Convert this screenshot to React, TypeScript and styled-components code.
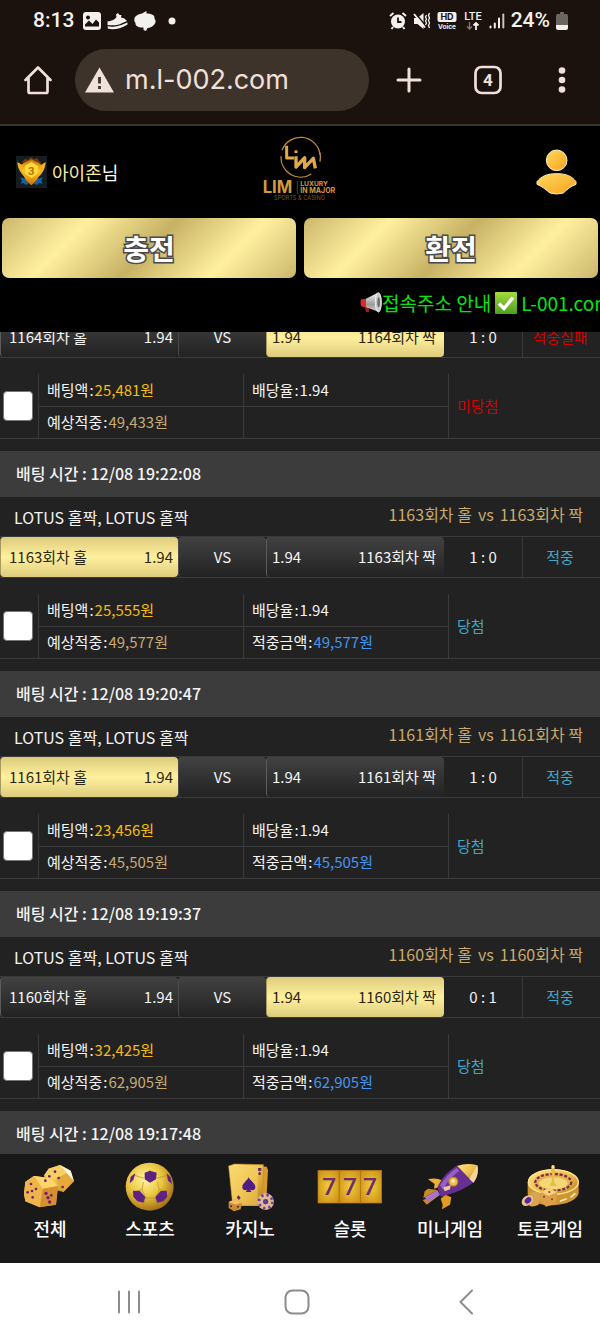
import React from "react";
import styled, { createGlobalStyle, css } from "styled-components";

const GlobalStyle = createGlobalStyle`
  *, *::before, *::after { box-sizing: border-box; }
  html, body { margin: 0; background: #222222; }
  body { font-family: "Noto Sans CJK KR", "Noto Sans", sans-serif; color: #f4f4f4; font-size: 15px; }
  button, input { font-family: inherit; margin: 0; }
  svg { display: block; flex: none; }
`;

const goldCell = "linear-gradient(180deg, #dccb7b 0%, #fff09e 50%, #dccb7b 100%)";
const darkCell = "linear-gradient(180deg, #424242 0%, #222222 100%)";
const goldButton =
  "linear-gradient(135deg, #cbb76c 0%, #fff09f 25%, #c7b164 50%, #fff09f 75%, #cbb76c 100%)";

const Screen = styled.div`
  display: flex;
  flex-direction: column;
  height: 100vh;
  overflow: hidden;
`;

/* ---------- browser chrome ---------- */

const Chrome = styled.header`
  flex: none;
  background: #1b120d;
  border-bottom: 2px solid #3b332a;
  padding-bottom: 13px;
`;

const StatusBar = styled.div`
  display: flex;
  align-items: center;
  justify-content: space-between;
  height: 41px;
  padding: 0 32px;
  font: 500 21px/41px Roboto, sans-serif;
  color: #f3f0ee;
`;

const StatusGroup = styled.div`
  display: flex;
  align-items: center;
  gap: 6px;
`;

const Clock = styled.span`
  padding: 0 3px 0 1px;
`;

const AddressRow = styled.div`
  display: flex;
  align-items: center;
  height: 62px;
  margin-top: 8px;
  padding: 0 28px 0 24px;
`;

const ChromeButton = styled.button<{ $left?: number }>`
  display: flex;
  align-items: center;
  justify-content: center;
  border: 0;
  padding: 0;
  margin-left: ${(p) => p.$left ?? 0}px;
  background: none;
  color: #efe0da;
`;

const AddressPill = styled.label`
  display: flex;
  flex: 1;
  min-width: 0;
  align-items: center;
  gap: 11px;
  height: 62px;
  margin-left: 23px;
  padding: 0 16px 0 10px;
  border-radius: 31px;
  background: #3d332a;
  color: #efe0da;
`;

const AddressInput = styled.input`
  flex: 1;
  min-width: 0;
  border: 0;
  padding: 0;
  outline: 0;
  background: none;
  color: inherit;
  font: 400 27px/40px Inter, sans-serif;
`;

/* ---------- site header ---------- */

const SiteHeader = styled.header`
  flex: none;
  background: #000;
`;

const Brand = styled.div`
  display: grid;
  grid-template-columns: 1fr auto 1fr;
  align-items: center;
  height: 92px;
  padding: 0 16px;
`;

const User = styled.div`
  display: flex;
  align-items: center;
  gap: 5px;
  font-size: 18px;
  line-height: 28px;
  color: #fff;
`;

const Nickname = styled.span`
  color: #fbe9a6;
`;

const PlainLink = styled.a<{ $end?: boolean }>`
  display: block;
  padding-right: ${(p) => (p.$end ? 7 : 0)}px;
  color: inherit;
  text-decoration: none;
  justify-self: ${(p) => (p.$end ? "end" : "center")};
`;

const MoneyButtons = styled.div`
  display: grid;
  grid-template-columns: 1fr 1fr;
  gap: 8px;
  padding: 0 2px;
`;

const MoneyButton = styled.button`
  height: 60px;
  border: 0;
  border-radius: 7px;
  padding: 0;
  background: ${goldButton};
  color: #fff;
  font-size: 28px;
  font-weight: 700;
  line-height: 58px;
  -webkit-text-stroke: 3px #4a4a4a;
  paint-order: stroke fill;
`;

const Ticker = styled.div`
  display: flex;
  align-items: center;
  gap: 4px;
  overflow: hidden;
  height: 54px;
  padding: 0 0 4px 60%;
  white-space: nowrap;
  font-size: 19px;
  line-height: 30px;
  color: #06e513;
`;

const Notice = styled.span`
  display: flex;
  align-items: center;
`;

/* ---------- bet list ---------- */

const BetArea = styled.main`
  flex: 1;
  min-height: 0;
  overflow: hidden;
  background: #222222;
`;

const BetList = styled.div`
  margin-top: -16px;
`;

const Bet = styled.article`
  padding-bottom: 12px;
`;

const TimeBar = styled.h2`
  margin: 0;
  padding: 0 16px;
  height: 46px;
  background: #3c3c3c;
  font-size: 16px;
  font-weight: 500;
  line-height: 45px;
`;

const TitleRow = styled.div`
  display: flex;
  justify-content: space-between;
  height: 39px;
  padding: 0 17px 0 14px;
  font-size: 16px;
  line-height: 40px;
  white-space: nowrap;
`;

const Matchup = styled.span`
  display: flex;
  gap: 6px;
  line-height: 35px;
  color: #c8aa6e;
`;

const PickRow = styled.div`
  display: grid;
  grid-template-columns: 178fr 88fr 178fr 78fr 78fr;
  height: 42px;
  border-top: 1px solid #3b3b3b;
  border-bottom: 1px solid #3b3b3b;
  line-height: 40px;
  white-space: nowrap;
`;

const Pick = styled.div<{ $on?: boolean; $away?: boolean }>`
  display: flex;
  justify-content: space-between;
  padding: ${(p) => (p.$away ? "0 8px 0 5px" : "0 5px 0 8px")};
  border-left: 1px solid #5c5c5c;
  border-radius: 4px;
  background: ${darkCell};
  ${(p) =>
    p.$on &&
    css`
      background: ${goldCell};
      border-color: #a89a5c;
      color: #2b2713;
    `}
`;

const Versus = styled.div`
  border-left: 1px solid #4a4a4a;
  border-radius: 4px;
  background: ${darkCell};
  text-align: center;
`;

const Score = styled.div`
  text-align: center;
`;

const outcomeColor = { win: "#41a6c9", lose: "#d40000" };
type Outcome = keyof typeof outcomeColor;

const PickResult = styled.div<{ $outcome: Outcome }>`
  border-left: 1px solid #3b3b3b;
  padding-right: 3px;
  text-align: center;
  color: ${(p) => outcomeColor[p.$outcome]};
`;

const Detail = styled.div`
  display: grid;
  grid-template-columns: 38px 205fr 205fr 152fr;
  height: 65px;
  margin-top: 16px;
  border-bottom: 1px solid #3b3b3b;
`;

const Tick = styled.input`
  appearance: none;
  align-self: center;
  width: 30px;
  height: 30px;
  margin-left: 3px;
  border: 1px solid #767676;
  border-radius: 4px;
  background: #fff;
  &:checked { background: #41a6c9; }
`;

const Facts = styled.div`
  display: grid;
  grid-template-rows: 32px 32px;
  border-left: 1px solid #3b3b3b;
  white-space: nowrap;
`;

const Fact = styled.div`
  display: flex;
  gap: 1px;
  padding-left: 8px;
  line-height: 32px;
  & + & { border-top: 1px solid #3b3b3b; line-height: 30px; }
`;

const factColor = { plain: "#f4f4f4", stake: "#f2bd12", expected: "#c8aa76", paid: "#4596ee" };

const FactValue = styled.span<{ $tone: keyof typeof factColor }>`
  color: ${(p) => factColor[p.$tone]};
`;

const Verdict = styled.div<{ $outcome: Outcome }>`
  border-left: 1px solid #3b3b3b;
  padding-left: 8px;
  line-height: 64px;
  color: ${(p) => outcomeColor[p.$outcome]};
`;

/* ---------- bottom navigation ---------- */

const GameNav = styled.nav`
  display: grid;
  flex: none;
  grid-template-columns: repeat(6, 1fr);
  padding: 8px 0 19px;
  background: #191919;
`;

const GameLink = styled.a`
  display: flex;
  flex-direction: column;
  align-items: center;
  color: #fff;
  text-decoration: none;
  font-size: 18px;
  font-weight: 500;
  line-height: 32px;
  white-space: nowrap;
`;

const SystemNav = styled.footer`
  display: grid;
  flex: none;
  grid-template-columns: repeat(3, 1fr);
  height: 75px;
  padding: 3px 50px 0 45px;
  background: #fff;
`;

const SystemButton = styled.button`
  display: flex;
  align-items: center;
  justify-content: center;
  border: 0;
  padding: 0;
  background: none;
  color: #8c8c8c;
`;

/* ---------- drawings ---------- */

const GalleryIcon = () => (
  <svg width="18" height="18" viewBox="0 0 18 18">
    <rect width="18" height="18" rx="3" fill="#f3f0ee" />
    <circle cx="5" cy="5.5" r="2" fill="#1b120d" />
    <path d="M2 12.5 6 8.5 9.5 12 13 7.5 16 10.5V14.5H2Z" fill="#1b120d" />
  </svg>
);

const ShoeIcon = () => (
  <svg width="21" height="18" viewBox="0 0 21 18" fill="#f3f0ee">
    <path d="M.5 9.500C4 9 7.500 8 9.500 5L9 2.500 11 1 12.500 3 14.500 3 14 5.500 17.500 6.500 20 9 12 12.500C8 13.500 4 13.500 .5 13Z" />
    <path d="M.5 14.300C6 15.500 11 14.500 20.500 10.500V12.500C13 17 7 18 1 16.800Z" />
  </svg>
);

const LeafIcon = () => (
  <svg width="22" height="20" viewBox="0 0 22 20" fill="#f3f0ee">
    <path d="M12.500 0V2.500C18 2.500 21 4.500 20.500 7.500 23.500 11 20 16.500 13.500 17L12 20 9.500 19V16.500C4 17 1 14.500 1.500 12-1.500 8.500 1 3.500 7.500 2.800Z" />
  </svg>
);

const DotIcon = () => (
  <svg width="16" height="8" viewBox="0 0 16 8">
    <circle cx="10" cy="4" r="3.500" fill="#f3f0ee" />
  </svg>
);

const AlarmIcon = () => (
  <svg width="18" height="18" viewBox="0 0 18 18">
    <path d="M1 4 4.500 1M17 4 13.500 1M4 15 2.500 17M14 15 15.500 17" stroke="#f3f0ee" strokeWidth="2" />
    <circle cx="9" cy="9.500" r="7" fill="#f3f0ee" />
    <path d="M9 5.500V10H12.500" fill="none" stroke="#1b120d" strokeWidth="1.800" />
  </svg>
);

const MuteIcon = () => (
  <svg width="18" height="18" viewBox="0 0 18 18">
    <path d="M1 6H4.500L10.500 1V17L4.500 12H1Z" fill="#f3f0ee" />
    <path d="M2.500 1 13 14.500" stroke="#1b120d" strokeWidth="1.500" />
    <path d="M1 2 12 15.500" stroke="#f3f0ee" strokeWidth="1.800" />
    <path d="M13.500 3 12.500 5 13.500 7 12.500 9 13.500 11 12.500 13M16.500 1 15.500 3.500 16.500 6 15.500 8.500 16.500 11 15.500 13.500 16.500 16" fill="none" stroke="#f3f0ee" strokeWidth="1.300" />
  </svg>
);

const HdVoiceIcon = () => (
  <svg width="20" height="18" viewBox="0 0 20 18" fontFamily="Inter, sans-serif" fontWeight="700" textAnchor="middle">
    <rect x=".5" y="0" width="19" height="10" rx="2" fill="#f3f0ee" />
    <text x="10" y="8.200" fontSize="9" fill="#1b120d">HD</text>
    <text x="10" y="16.500" fontSize="6.500" fill="#f3f0ee">Voice</text>
  </svg>
);

const LteIcon = () => (
  <svg width="20" height="20" viewBox="0 0 20 20">
    <text x="10" y="9" fontSize="11" fontWeight="500" textAnchor="middle" fill="#f3f0ee" fontFamily="Roboto, sans-serif">LTE</text>
    <path d="M6.500 11V18M4 15.500 6.500 18 9 15.500" fill="none" stroke="#857d78" strokeWidth="1.300" />
    <path d="M13 19V12M10.500 14.500 13 12 15.500 14.500" fill="none" stroke="#f3f0ee" strokeWidth="1.800" />
  </svg>
);

const SignalIcon = () => (
  <svg width="16" height="16" viewBox="0 0 16 16" strokeLinecap="round" strokeWidth="2" stroke="#f3f0ee">
    <path d="M1.500 13.500V14.500M5.800 10.500V14.500M10 5.500V14.500" />
    <path d="M14.300 1.500V14.500" stroke="#c9c3bf" />
  </svg>
);

const BatteryIcon = () => (
  <svg width="12" height="18" viewBox="0 0 12 18">
    <path d="M4 0H8V2H10.500Q12 2 12 4V13H0V4Q0 2 1.500 2H4Z" fill="#6c6661" />
    <path d="M0 13H12V16Q12 18 10 18H2Q0 18 0 16Z" fill="#f3f0ee" />
  </svg>
);

const HomeIcon = () => (
  <svg width="28" height="30" viewBox="0 0 28 30" fill="none" stroke="currentColor" strokeWidth="2.700" strokeLinecap="round" strokeLinejoin="round">
    <path d="M1.500 15 14 2.500 26.500 15M4.500 12.500V26.500Q4.500 28 6 28H22Q23.500 28 23.500 26.500V12.500" />
  </svg>
);

const WarningIcon = () => (
  <svg width="29" height="26" viewBox="0 0 29 26">
    <path d="M14.500 .5 29 25.500H0Z" fill="#efe0da" />
    <path d="M14.500 10V16.500M14.500 19V22" stroke="#3d332a" strokeWidth="2.800" />
  </svg>
);

const PlusIcon = () => (
  <svg width="26" height="26" viewBox="0 0 26 26" stroke="currentColor" strokeWidth="3" strokeLinecap="round">
    <path d="M13 2V24M2 13H24" />
  </svg>
);

const TabsIcon = () => (
  <svg width="28" height="30" viewBox="0 0 28 30">
    <rect x="1.500" y="2" width="25" height="26" rx="6" fill="none" stroke="currentColor" strokeWidth="2.700" />
    <text x="14" y="21" fontSize="17" fontWeight="700" textAnchor="middle" fill="currentColor" fontFamily="Roboto, sans-serif">4</text>
  </svg>
);

const MoreIcon = () => (
  <svg width="20" height="28" viewBox="0 0 20 28" fill="currentColor">
    <circle cx="10" cy="4.500" r="3.300" />
    <circle cx="10" cy="14" r="3.300" />
    <circle cx="10" cy="23.500" r="3.300" />
  </svg>
);

const LevelBadge = () => (
  <svg width="31" height="32" viewBox="0 0 93 96">
    <defs>
      <linearGradient id="shield" x1="0" y1="0" x2="0" y2="1">
        <stop offset="0" stopColor="#c87208" />
        <stop offset=".45" stopColor="#ffc61f" />
        <stop offset="1" stopColor="#cf6f05" />
      </linearGradient>
    </defs>
    <rect width="93" height="96" fill="#151d20" />
    <path d="M18 18 28 8 36 12 44 3 54 10 64 6 70 16 76 20 60 26H28Z" fill="#6a3c10" />
    <path d="M4 18 24 30 26 62C12 50 5 36 4 18ZM89 18 70 30 68 62C82 50 88 36 89 18Z" fill="#f0b02a" />
    <path d="M12 64 28 68 38 84 28 86 22 80 14 84 18 74ZM81 64 65 68 54 84 64 86 70 80 80 84 76 74Z" fill="#1463a8" />
    <path d="M46 10 74 24C76 54 66 72 46 88 26 72 16 54 18 24Z" fill="url(#shield)" />
    <path d="M46 18 66 30 64 54 46 66 28 54 26 30Z" fill="#ffdc3c" />
    <text x="46" y="56" fontSize="34" fontWeight="700" textAnchor="middle" fill="#b87408" fontFamily="Roboto, sans-serif">3</text>
  </svg>
);

const LimLogo = () => (
  <svg width="80" height="75" viewBox="60 12 240 225" fill="none">
    <g stroke="#b98a3c" strokeWidth="4">
      <path d="M126 58A59 59 0 0 1 240 70" />
      <path d="M240 66A59 59 0 0 1 240 92" />
      <path d="M123 76A59 59 0 0 0 214 129" />
    </g>
    <g stroke="#e0a848" strokeWidth="9" strokeLinejoin="round">
      <path d="M140 44V81H162" />
      <path d="M168 76V108L194 80V110L220 82 226 112" strokeWidth="10" />
      <path d="M168 58V66" />
    </g>
    <path d="M172 150V190" stroke="#7b5a22" strokeWidth="2" />
    <g fill="#d39b3f" fontFamily="Inter, sans-serif" fontWeight="700">
      <text x="68" y="187" fontSize="50">LIM</text>
      <text x="181" y="164" fontSize="20">LUXURY</text>
      <text x="181" y="186" fontSize="21">IN MAJOR</text>
      <text x="102" y="207" fontSize="17" fontWeight="400" fill="#7b5a22">SPORTS &amp; CASINO</text>
    </g>
  </svg>
);

const ProfileIcon = () => (
  <svg width="41" height="46" viewBox="0 0 123 138">
    <defs>
      <linearGradient id="person" x1="0" y1="0" x2="1" y2="1">
        <stop offset="0" stopColor="#ffd95a" />
        <stop offset="1" stopColor="#f9a21f" />
      </linearGradient>
    </defs>
    <g fill="url(#person)" stroke="#fff0c0" strokeWidth="3">
      <circle cx="62" cy="34" r="31" />
      <path d="M62 74C92 74 108 82 120 98V106C104 112 92 122 82 132Q62 138 42 132C30 122 18 112 3 106V98C16 82 32 74 62 74Z" />
    </g>
  </svg>
);

const MegaphoneIcon = () => (
  <svg width="22" height="22" viewBox="0 0 66 66">
    <defs>
      <linearGradient id="horn" x1="0" y1="0" x2="0" y2="1">
        <stop offset="0" stopColor="#f4f4f4" />
        <stop offset=".6" stopColor="#9a9a9a" />
        <stop offset="1" stopColor="#d8d8d8" />
      </linearGradient>
    </defs>
    <path d="M14 42 26 44 28 60 18 60Z" fill="#a81818" />
    <path d="M2 26Q2 22 8 22L20 20V46L8 44Q2 44 2 38Z" fill="#e02a2a" />
    <path d="M18 20 52 3 58 60 18 46Z" fill="url(#horn)" />
    <ellipse cx="55" cy="31" rx="9" ry="29" fill="#c9c9c9" stroke="#efefef" strokeWidth="3" />
    <ellipse cx="56" cy="31" rx="4" ry="15" fill="#6c6c6c" />
  </svg>
);

const CheckIcon = () => (
  <svg width="22" height="22" viewBox="0 0 22 22">
    <defs>
      <linearGradient id="check" x1="0" y1="0" x2="0" y2="1">
        <stop offset="0" stopColor="#a4dc3c" />
        <stop offset="1" stopColor="#4d9e1e" />
      </linearGradient>
    </defs>
    <rect width="22" height="22" rx="1" fill="url(#check)" />
    <path d="M4 11.500 9 16.500 18 5.500" fill="none" stroke="#fff" strokeWidth="3.500" />
  </svg>
);

const GoldDefs = ({ id }: { id: string }) => (
  <defs>
    <linearGradient id={id} x1="0" y1="0" x2="1" y2="1">
      <stop offset="0" stopColor="#ffe58a" />
      <stop offset=".5" stopColor="#f0c04a" />
      <stop offset="1" stopColor="#b87a1c" />
    </linearGradient>
  </defs>
);

const DiceIcon = () => (
  <svg width="66" height="50" viewBox="51 156 198 150">
    <GoldDefs id="dice" />
    <path d="M132 196 146 176 180 165 212 182 222 214 190 246 168 240Z" fill="url(#dice)" />
    <path d="M180 165 212 182 222 214 200 190Z" fill="#fff4e4" />
    <path d="M132 200 146 176 180 165 200 190 168 206Z" fill="#f6cf63" />
    <path d="M168 206 200 190 221 214 190 246Z" fill="#e7a83c" />
    <path d="M76 216 102 198 150 204 174 228 168 284 118 292 76 274 72 252Z" fill="url(#dice)" />
    <path d="M76 216 102 198 150 204 174 228 128 236Z" fill="#ffd56a" />
    <path d="M76 216 102 198 128 236 120 291 76 274 72 252Z" fill="#efb44c" />
    <path d="M128 236 174 228 168 284 120 291Z" fill="#d88f34" />
    <g fill="#6b2468">
      <circle cx="93" cy="222" r="4" /><circle cx="108" cy="237" r="4" /><circle cx="96" cy="243" r="4" />
      <circle cx="83" cy="247" r="4" /><circle cx="98" cy="262" r="4" /><circle cx="138" cy="250" r="5" />
      <circle cx="144" cy="263" r="5" /><circle cx="149" cy="276" r="5" /><circle cx="154" cy="256" r="4" />
      <circle cx="165" cy="185" r="4" /><circle cx="148" cy="199" r="4" /><circle cx="136" cy="212" r="4" />
      <circle cx="176" cy="204" r="4" /><circle cx="188" cy="231" r="4" />
    </g>
  </svg>
);

const BallIcon = () => (
  <svg width="66" height="50" viewBox="351 156 198 150">
    <defs>
      <radialGradient id="ball" cx=".4" cy=".35" r=".65">
        <stop offset="0" stopColor="#fff5a0" />
        <stop offset=".55" stopColor="#eac63f" />
        <stop offset="1" stopColor="#a8741a" />
      </radialGradient>
    </defs>
    <circle cx="449" cy="230" r="72" fill="url(#ball)" />
    <path d="M450 216V180M425 238 398 248M478 238 500 246M432 205 398 194M470 205 502 196M436 266 428 292M466 266 474 290M430 216 426 240 438 264H466L478 240 472 216" fill="none" stroke="#b8881f" strokeWidth="2" />
    <g fill="#5f2283">
      <path d="M434 188 450 182 470 188 468 208 450 218 434 208Z" />
      <path d="M399 242 420 243 436 262 430 278 412 274 400 260Z" />
      <path d="M500 242 482 243 466 262 472 278 490 274 502 260Z" />
      <path d="M392 200 406 190 400 210 389 220Z" />
      <path d="M500 190 512 202 516 222 504 212Z" />
    </g>
  </svg>
);

const CardsIcon = () => (
  <svg width="66" height="50" viewBox="651 156 198 150">
    <GoldDefs id="cards" />
    <path d="M700 162 800 170 804 180 798 288H720Z" fill="#d99a2c" />
    <path d="M686 168 704 162 790 164 788 284 698 282Z" fill="url(#cards)" stroke="#c48a2a" strokeWidth="2" />
    <path d="M687 169 775 167 772 286 698 284Z" fill="#f4cf62" opacity=".55" />
    <path d="M746 202C752 214 766 220 766 232 766 240 756 244 750 238L754 246H738L742 238C736 244 727 240 727 232 727 220 740 214 746 202Z" fill="#4e1c86" />
    <path d="M774 174H784V182H774ZM779 184 784 192 779 196 774 192ZM710 262 716 256 722 264 716 270Z" fill="#5f2a70" />
    <path d="M686 276 706 268 726 278 722 298 702 304 686 294Z" fill="#c98a38" />
    <path d="M686 276 706 268 726 278 706 284Z" fill="#f0bf62" />
    <circle cx="693" cy="289" r="3" fill="#5c1d1d" /><circle cx="714" cy="290" r="3" fill="#5c1d1d" />
    <circle cx="797" cy="275" r="25" fill="#e6b98a" />
    <circle cx="797" cy="275" r="20" fill="none" stroke="#6a3fa0" strokeWidth="8" strokeDasharray="7 9" />
    <circle cx="797" cy="275" r="10" fill="#5c3f9a" stroke="#efd0a0" strokeWidth="3" />
  </svg>
);

const SlotIcon = () => (
  <svg width="66" height="50" viewBox="51 156 198 150">
    <defs>
      <radialGradient id="reel" cx=".5" cy=".5" r=".7">
        <stop offset="0" stopColor="#f2cc3a" />
        <stop offset="1" stopColor="#c98a12" />
      </radialGradient>
    </defs>
    {[54, 118, 182].map((x) => (
      <rect key={x} x={x} y="181" width="63" height="98" fill="url(#reel)" stroke="#b87a14" strokeWidth="2" />
    ))}
    <g fontFamily="Roboto, sans-serif" fontSize="74" fontWeight="500" textAnchor="middle" fill="#6d2c6c">
      <text x="88" y="254">7</text>
      <text x="150" y="254">7</text>
      <text x="210" y="254">7</text>
    </g>
  </svg>
);

const RocketIcon = () => (
  <svg width="66" height="50" viewBox="351 156 198 150">
    <GoldDefs id="rocket" />
    <path d="M436 254 454 262 450 284 426 298 428 284 422 266Z" fill="#e09c20" />
    <path d="M384 208Q408 202 428 212L416 232 402 236 404 222Z" fill="#f0b034" />
    <path d="M412 240 370 264 374 244 384 236ZM420 254 380 284 368 270Z" fill="#c98a24" />
    <path d="M374 262 412 240 420 254 384 276Z" fill="#a873c8" />
    <path d="M412 232C424 204 446 180 476 164L524 214C498 236 464 250 422 260Z" fill="#65308f" />
    <path d="M420 226C432 206 448 188 470 174L478 182C456 198 440 216 430 240Z" fill="#9560c0" />
    <path d="M472 168C492 160 512 160 532 166 536 184 532 204 520 218Z" fill="url(#rocket)" />
    <path d="M532 166C536 184 532 204 520 218L508 206Z" fill="#f8d49a" />
    <circle cx="460" cy="215" r="13" fill="#f2c04a" stroke="#c88828" strokeWidth="4" />
    <circle cx="459" cy="213" r="5" fill="#fff2c0" />
    <path d="M430 232 452 226 450 238 434 244Z" fill="#f0c8a8" />
  </svg>
);

const RouletteIcon = () => (
  <svg width="66" height="50" viewBox="651 156 198 150">
    <GoldDefs id="wheel" />
    <path d="M683 216V252C690 278 730 288 760 286 800 284 832 270 836 250V216Z" fill="#cf9434" />
    <ellipse cx="760" cy="216" rx="76" ry="38" fill="url(#wheel)" />
    <ellipse cx="760" cy="216" rx="75" ry="37" fill="none" stroke="#ffe590" strokeWidth="4" />
    <ellipse cx="760" cy="217" rx="60" ry="29" fill="#e6b552" />
    <ellipse cx="760" cy="217" rx="54" ry="25" fill="none" stroke="#7c2e4a" strokeWidth="7" strokeDasharray="9 5" />
    <ellipse cx="760" cy="220" rx="42" ry="18" fill="#f4d878" />
    <path d="M754 172H764V180L762 214 770 228H748L756 214Z" fill="#e9bc48" />
    <circle cx="759" cy="170" r="5" fill="#ffe38a" />
    <path d="M724 246 744 234 772 246 768 280 738 290 718 270Z" fill="#dca048" />
    <path d="M724 246 744 234 772 246 746 258Z" fill="#f6cf80" />
    <path d="M692 250Q706 240 722 250L716 284Q700 292 688 288Z" fill="#d8a650" />
    <ellipse cx="682" cy="272" rx="19" ry="14" fill="#e9c480" transform="rotate(-40 682 272)" />
    <ellipse cx="684" cy="271" rx="11" ry="8" fill="#5a22a8" transform="rotate(-40 684 271)" />
    <g fill="#8a3a24">
      <circle cx="732" cy="260" r="3" /><circle cx="756" cy="268" r="3" /><circle cx="748" cy="246" r="3" />
    </g>
    <path d="M780 274 800 266M812 262 826 250" stroke="#fff0b0" strokeWidth="5" />
  </svg>
);

const RecentsIcon = () => (
  <svg width="24" height="24" viewBox="0 0 24 24" stroke="currentColor" strokeWidth="2" strokeLinecap="round">
    <path d="M2 1.500V22.500M12 1.500V22.500M22 1.500V22.500" />
  </svg>
);

const HomeSquareIcon = () => (
  <svg width="26" height="26" viewBox="0 0 26 26" fill="none" stroke="currentColor" strokeWidth="2">
    <rect x="1.500" y="1.500" width="23" height="23" rx="7" />
  </svg>
);

const BackIcon = () => (
  <svg width="14" height="26" viewBox="0 0 14 26" fill="none" stroke="currentColor" strokeWidth="2" strokeLinecap="round" strokeLinejoin="round">
    <path d="M13 1.500 1.500 13 13 24.500" />
  </svg>
);

/* ---------- data ---------- */

type BetData = {
  time?: string;
  round: string;
  pick: "홀" | "짝";
  score: string;
  result: string;
  verdict: string;
  outcome: Outcome;
  stake: string;
  expected: string;
  paid?: string;
};

const bets: BetData[] = [
  { round: "1164", pick: "짝", score: "1 : 0", result: "적중실패", verdict: "미당첨", outcome: "lose", stake: "25,481원", expected: "49,433원" },
  { time: "12/08 19:22:08", round: "1163", pick: "홀", score: "1 : 0", result: "적중", verdict: "당첨", outcome: "win", stake: "25,555원", expected: "49,577원", paid: "49,577원" },
  { time: "12/08 19:20:47", round: "1161", pick: "홀", score: "1 : 0", result: "적중", verdict: "당첨", outcome: "win", stake: "23,456원", expected: "45,505원", paid: "45,505원" },
  { time: "12/08 19:19:37", round: "1160", pick: "짝", score: "0 : 1", result: "적중", verdict: "당첨", outcome: "win", stake: "32,425원", expected: "62,905원", paid: "62,905원" },
];

const games = [
  { label: "전체", Icon: DiceIcon },
  { label: "스포츠", Icon: BallIcon },
  { label: "카지노", Icon: CardsIcon },
  { label: "슬롯", Icon: SlotIcon },
  { label: "미니게임", Icon: RocketIcon },
  { label: "토큰게임", Icon: RouletteIcon },
];

type FactLineProps = { label: string; value: string; tone: keyof typeof factColor };

const FactLine = ({ label, value, tone }: FactLineProps) => (
  <Fact>
    <span>{label}</span>
    <span>:</span>
    <FactValue $tone={tone}>{value}</FactValue>
  </Fact>
);

const BetRecord = ({ bet }: { bet: BetData }) => (
  <Bet>
    {bet.time && (
      <>
        <TimeBar>배팅 시간 : {bet.time}</TimeBar>
        <TitleRow>
          <span>LOTUS 홀짝, LOTUS 홀짝</span>
          <Matchup>
            <span>{bet.round}회차 홀</span>
            <span>vs</span>
            <span>{bet.round}회차 짝</span>
          </Matchup>
        </TitleRow>
      </>
    )}
    <PickRow>
      <Pick $on={bet.pick === "홀"}>
        <span>{bet.round}회차 홀</span>
        <span>1.94</span>
      </Pick>
      <Versus>VS</Versus>
      <Pick $away $on={bet.pick === "짝"}>
        <span>1.94</span>
        <span>{bet.round}회차 짝</span>
      </Pick>
      <Score>{bet.score}</Score>
      <PickResult $outcome={bet.outcome}>{bet.result}</PickResult>
    </PickRow>
    <Detail>
      <Tick type="checkbox" aria-label={`${bet.round}회차`} />
      <Facts>
        <FactLine label="배팅액" value={bet.stake} tone="stake" />
        <FactLine label="예상적중" value={bet.expected} tone="expected" />
      </Facts>
      <Facts>
        <FactLine label="배당율" value="1.94" tone="plain" />
        {bet.paid ? <FactLine label="적중금액" value={bet.paid} tone="paid" /> : <Fact />}
      </Facts>
      <Verdict $outcome={bet.outcome}>{bet.verdict}</Verdict>
    </Detail>
  </Bet>
);

export default function App() {
  return (
    <Screen>
      <GlobalStyle />
      <Chrome>
        <StatusBar>
          <StatusGroup>
            <Clock>8:13</Clock>
            <GalleryIcon />
            <ShoeIcon />
            <LeafIcon />
            <DotIcon />
          </StatusGroup>
          <StatusGroup>
            <AlarmIcon />
            <MuteIcon />
            <HdVoiceIcon />
            <LteIcon />
            <SignalIcon />
            <span>24%</span>
            <BatteryIcon />
          </StatusGroup>
        </StatusBar>
        <AddressRow>
          <ChromeButton aria-label="홈"><HomeIcon /></ChromeButton>
          <AddressPill>
            <WarningIcon />
            <AddressInput type="text" aria-label="주소" defaultValue="m.l-002.com" />
          </AddressPill>
          <ChromeButton $left={27} aria-label="새 탭"><PlusIcon /></ChromeButton>
          <ChromeButton $left={52} aria-label="탭 전환"><TabsIcon /></ChromeButton>
          <ChromeButton $left={50} aria-label="더보기"><MoreIcon /></ChromeButton>
        </AddressRow>
      </Chrome>

      <SiteHeader>
        <Brand>
          <User>
            <LevelBadge />
            <span><Nickname>아이존</Nickname>님</span>
          </User>
          <PlainLink href="#home" aria-label="LIM"><LimLogo /></PlainLink>
          <PlainLink href="#profile" aria-label="내 정보" $end><ProfileIcon /></PlainLink>
        </Brand>
        <MoneyButtons>
          <MoneyButton>충전</MoneyButton>
          <MoneyButton>환전</MoneyButton>
        </MoneyButtons>
        <Ticker>
          <Notice>
            <MegaphoneIcon />
            접속주소 안내
          </Notice>
          <CheckIcon />
          <span>L-001.com</span>
        </Ticker>
      </SiteHeader>

      <BetArea>
        <BetList>
          {bets.map((bet) => (
            <BetRecord key={bet.round} bet={bet} />
          ))}
          <TimeBar>배팅 시간 : 12/08 19:17:48</TimeBar>
        </BetList>
      </BetArea>

      <GameNav>
        {games.map(({ label, Icon }) => (
          <GameLink key={label} href="#games">
            <Icon />
            {label}
          </GameLink>
        ))}
      </GameNav>

      <SystemNav>
        <SystemButton aria-label="최근 앱"><RecentsIcon /></SystemButton>
        <SystemButton aria-label="홈 화면"><HomeSquareIcon /></SystemButton>
        <SystemButton aria-label="뒤로"><BackIcon /></SystemButton>
      </SystemNav>
    </Screen>
  );
}
